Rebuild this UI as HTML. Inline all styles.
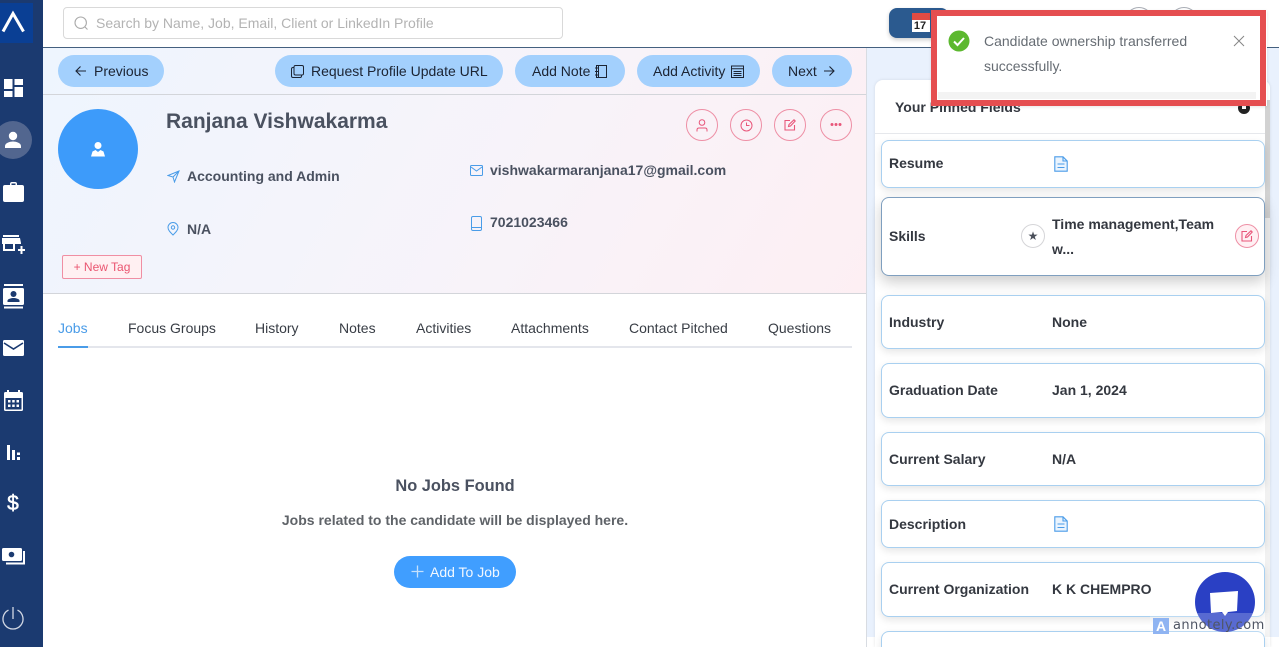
<!DOCTYPE html>
<html><head><meta charset="utf-8">
<style>
*{box-sizing:border-box}
html,body{margin:0;padding:0;width:1279px;height:647px;overflow:hidden;background:#fff;font-family:"Liberation Sans",sans-serif;color:#333}
#wrap{position:relative;width:1279px;height:647px;overflow:hidden}
.a{position:absolute}
.t{position:absolute;white-space:nowrap;line-height:20px}
svg{position:absolute;display:block}
.btn{position:absolute;height:32px;border-radius:16px;background:#a3d0fd;top:55px}
.bt{position:absolute;top:61px;font-size:14px;line-height:20px;color:#1c2433;white-space:nowrap}
.rnd{position:absolute;top:109px;width:32px;height:32px;border-radius:50%;border:1px solid #ee8fa5}
.tab{position:absolute;top:318px;font-size:14px;line-height:20px;color:#383d45;white-space:nowrap}
.b{font-weight:700;font-size:14px;color:#4a5160}
.card{position:absolute;left:881px;width:384px;background:#fff;border:1px solid #a9d0f0;border-radius:8px;box-shadow:0 3px 8px rgba(0,0,0,.1)}
.l{position:absolute;left:889px;font-weight:700;font-size:14px;line-height:20px;color:#343840;white-space:nowrap}
.v{position:absolute;left:1052px;font-weight:700;font-size:14px;line-height:20px;color:#343840;white-space:nowrap}
</style></head><body><div id="wrap">
<!-- main bg -->
<div class="a" style="left:43px;top:47px;width:824px;height:247px;background:linear-gradient(120deg,#eef5fe 0%,#f8f3f9 60%,#fdeff3 100%)"></div>
<div class="a" style="left:43px;top:94px;width:823px;height:1px;background:#d3d5da"></div>
<div class="a" style="left:43px;top:293px;width:823px;height:1px;background:#d3d5da"></div>
<div class="a" style="left:866px;top:47px;width:1px;height:600px;background:#d8dce2"></div>
<div class="a" style="left:867px;top:48px;width:412px;height:589px;background:#e9f1fd"></div>
<div class="a" style="left:867px;top:637px;width:412px;height:10px;background:#fff"></div>
<div class="a" style="left:43px;top:47px;width:1236px;height:1px;background:#44607f"></div>

<!-- sidebar -->
<div class="a" style="left:0;top:0;width:43px;height:647px;background:#1b3a70"></div>
<div class="a" style="left:0;top:3px;width:33px;height:40px;background:#0a3f94"></div>
<svg style="left:0;top:3px" width="33" height="40" viewBox="0 0 33 40"><path d="M3 28.500L13 10.500L23.500 28.500" fill="none" stroke="#fff" stroke-width="3"/></svg>
<svg style="left:4px;top:79px" width="19" height="18" viewBox="0 0 19 18" fill="#fff"><rect width="8.500" height="10"/><rect x="10.500" width="8.500" height="6"/><rect y="12" width="8.500" height="6"/><rect x="10.500" y="8" width="8.500" height="10"/></svg>
<div class="a" style="left:-6px;top:121px;width:38px;height:38px;border-radius:50%;background:#52668f"></div>
<svg style="left:4px;top:131px" width="18" height="18" viewBox="0 0 18 18" fill="#fff"><circle cx="9" cy="5" r="4.200"/><path d="M1 17v-2c0-3 5-4.500 8-4.500s8 1.500 8 4.500v2z"/></svg>
<svg style="left:3px;top:182px" width="21" height="20" viewBox="0 0 21 20" fill="#fff"><path d="M7 3V2q0-2 2-2h3q2 0 2 2v1h5q2 0 2 2v13q0 2-2 2H2q-2 0-2-2V5q0-2 2-2zM8.500 3h4V1.500h-4z"/></svg>
<svg style="left:2px;top:235px" width="23" height="20" viewBox="0 0 23 20" fill="#fff"><rect x="1" width="16" height="2"/><path d="M0 3h18l1 5v1H0V8z"/><path d="M1 9h2v5h8V9h2v7H1z"/><rect x="16" y="14" width="7" height="2"/><rect x="18.500" y="11" width="2" height="8"/></svg>
<svg style="left:3px;top:284px" width="21" height="25" viewBox="0 0 21 25" fill="#fff"><rect x="1" width="19" height="2"/><rect x="1" y="22.500" width="19" height="2"/><rect y="4" width="21" height="17" rx="1.500"/><circle cx="10.500" cy="10" r="3" fill="#1b3a70"/><path d="M4.500 18v-1.500c0-1.500 4-2.500 6-2.500s6 1 6 2.500V18z" fill="#1b3a70"/></svg>
<svg style="left:3px;top:340px" width="21" height="16" viewBox="0 0 21 16"><rect width="21" height="16" rx="1.500" fill="#fff"/><path d="M1 3l9.500 6L20 3" fill="none" stroke="#1b3a70" stroke-width="1.600"/></svg>
<svg style="left:4px;top:390px" width="19" height="21" viewBox="0 0 19 21" fill="#fff"><rect x="3" width="2" height="4"/><rect x="14" width="2" height="4"/><rect y="2" width="19" height="19" rx="1.500"/><rect x="1.500" y="8" width="16" height="11.500" fill="#1b3a70"/><g fill="#fff"><rect x="4" y="10" width="2.500" height="2.500"/><rect x="8.200" y="10" width="2.500" height="2.500"/><rect x="12.500" y="10" width="2.500" height="2.500"/><rect x="4" y="14.500" width="2.500" height="2.500"/><rect x="8.200" y="14.500" width="2.500" height="2.500"/><rect x="12.500" y="14.500" width="2.500" height="2.500"/></g></svg>
<svg style="left:7px;top:445px" width="14" height="15" viewBox="0 0 14 15" fill="#fff"><rect width="3" height="15"/><rect x="5" y="5" width="3" height="10"/><rect x="10" y="7.500" width="3" height="2.500"/><rect x="10" y="12" width="3" height="3"/></svg>
<div class="t" style="left:3px;top:494px;width:20px;text-align:center;font-size:21px;line-height:20px;color:#fff;-webkit-text-stroke:.5px #fff">$</div>
<svg style="left:2px;top:548px" width="23" height="18" viewBox="0 0 23 18"><rect width="20" height="13" rx="1.500" fill="#fff"/><circle cx="9.500" cy="6.500" r="2.800" fill="#1b3a70"/><path d="M22 3v12.500H4" fill="none" stroke="#fff" stroke-width="2"/></svg>
<svg style="left:2px;top:606px" width="22" height="25" viewBox="0 0 22 25" fill="none" stroke="#d2d8e4" stroke-width="1.300"><path d="M6.500 4.100a10 10 0 1 0 9 0"/><path d="M11 1v12"/></svg>

<!-- search -->
<div class="a" style="left:63px;top:7px;width:500px;height:32px;border:1px solid #d9d9d9;border-radius:4px;background:#fff"></div>
<svg style="left:74px;top:16px" width="15" height="15" viewBox="0 0 15 15" fill="none" stroke="#aaa" stroke-width="1.100"><circle cx="6.700" cy="6.700" r="5.700"/><path d="M11 11l2.500 2.500"/></svg>
<div class="t" style="left:96px;top:13px;font-size:14px;color:#b3b3b3">Search by Name, Job, Email, Client or LinkedIn Profile</div>

<!-- header btn -->
<div class="a" style="left:889px;top:8px;width:60px;height:30px;border-radius:8px;background:#2b5a8f;box-shadow:0 2px 4px rgba(0,0,0,.2)"></div>
<div class="a" style="left:912px;top:13px;width:18px;height:19px;background:#fff"></div>
<div class="a" style="left:912px;top:13px;width:18px;height:7px;background:#e14b43"></div>
<div class="t" style="left:911px;top:20px;width:18px;height:12px;line-height:12px;font-size:11px;font-weight:700;color:#222;text-align:center">17</div>
<div class="a" style="left:1125px;top:7px;width:28px;height:28px;border-radius:50%;border:1px solid #a9adb5"></div>
<div class="a" style="left:1170px;top:7px;width:28px;height:28px;border-radius:50%;border:1px solid #a9adb5"></div>

<!-- action buttons -->
<div class="btn" style="left:58px;width:106px"></div>
<svg style="left:75px;top:65px" width="12" height="12" viewBox="0 0 12 12" fill="none" stroke="#1c2433" stroke-width="1.100"><path d="M11 6H1M5.500 1.500L1 6l4.500 4.500"/></svg>
<div class="bt" style="left:94px">Previous</div>
<div class="btn" style="left:275px;width:228px"></div>
<svg style="left:291px;top:65px" width="13" height="13" viewBox="0 0 13 13" fill="none" stroke="#1c2433" stroke-width="1"><rect x="3" y=".5" width="9.500" height="9.500" rx="1.500"/><path d="M3 2.500H2Q.5 2.500 .5 4v7q0 1.500 1.500 1.500h7q1.500 0 1.500-1.500v-1"/></svg>
<div class="bt" style="left:311px">Request Profile Update URL</div>
<div class="btn" style="left:515px;width:110px"></div>
<div class="bt" style="left:532px">Add Note</div>
<svg style="left:595px;top:65px" width="13" height="13" viewBox="0 0 13 13" fill="none" stroke="#1c2433" stroke-width="1"><rect x="1.500" y=".5" width="10" height="12"/><path d="M3.500 .5v12M0 3h3M0 6.500h3M0 10h3"/></svg>
<div class="btn" style="left:637px;width:123px"></div>
<div class="bt" style="left:653px">Add Activity</div>
<svg style="left:731px;top:65px" width="13" height="13" viewBox="0 0 13 13" fill="none" stroke="#1c2433" stroke-width="1"><rect x=".5" y="1" width="12" height="11.500"/><path d="M.5 3.800h12M2.500 6.500h8M2.500 8.500h8M2.500 10.500h8"/></svg>
<div class="btn" style="left:772px;width:80px"></div>
<div class="bt" style="left:788px">Next</div>
<svg style="left:823px;top:65px" width="12" height="12" viewBox="0 0 12 12" fill="none" stroke="#1c2433" stroke-width="1.100"><path d="M1 6h10M6.500 1.500L11 6l-4.500 4.500"/></svg>

<!-- profile -->
<div class="a" style="left:58px;top:109px;width:80px;height:80px;border-radius:50%;background:#3d9bfa"></div>
<svg style="left:90px;top:141px" width="16" height="16" viewBox="0 0 16 16" fill="#fff"><circle cx="8" cy="4.500" r="3.500"/><path d="M1 15.500l1.500-5 3-1.500L8 11l2.500-2 3 1.500 1.500 5z"/></svg>
<div class="a" style="left:62px;top:255px;width:80px;height:24px;border:1px solid #f08ea3;border-radius:2px;background:#fff0f2"></div>
<div class="t" style="left:62px;top:257px;width:80px;text-align:center;font-size:12px;color:#ea5570">+ New Tag</div>
<div class="t" style="left:166px;top:110px;font-size:21px;line-height:24px;font-weight:700;color:#4a5160">Ranjana Vishwakarma</div>

<svg style="left:167px;top:170px" width="13" height="13" viewBox="0 0 13 13" fill="none" stroke="#4a9ce8" stroke-width="1"><path d="M12 1L1 5.500l5 1.500 1.500 5z M6 7l6-6"/></svg>
<div class="t b" style="left:187px;top:166px">Accounting and Admin</div>
<svg style="left:167px;top:222px" width="12" height="14" viewBox="0 0 12 14" fill="none" stroke="#4a9ce8" stroke-width="1"><path d="M6 13C3 10 1 8 1 5.500a5 5 0 0 1 10 0C11 8 9 10 6 13z"/><circle cx="6" cy="5.500" r="1.700"/></svg>
<div class="t b" style="left:187px;top:219px">N/A</div>
<svg style="left:470px;top:165px" width="13" height="11" viewBox="0 0 13 11" fill="none" stroke="#4a9ce8" stroke-width="1"><rect x=".5" y=".5" width="12" height="10" rx="1"/><path d="M1 2l5.500 4L12 2"/></svg>
<div class="t b" style="left:490px;top:160px">vishwakarmaranjana17@gmail.com</div>
<svg style="left:471px;top:216px" width="11" height="15" viewBox="0 0 11 15" fill="none" stroke="#4a9ce8" stroke-width="1"><rect x=".5" y=".5" width="10" height="14" rx="1.500"/><path d="M.5 11.500h10"/></svg>
<div class="t b" style="left:490px;top:212px">7021023466</div>

<div class="rnd" style="left:686px"></div>
<svg style="left:696px;top:119px" width="12" height="13" viewBox="0 0 12 13" fill="none" stroke="#e8567a" stroke-width="1"><circle cx="6" cy="3.500" r="2.800"/><path d="M1 12.500V11q0-2 2-2h6q2 0 2 2v1.500"/></svg>
<div class="rnd" style="left:730px"></div>
<svg style="left:740px;top:119px" width="13" height="13" viewBox="0 0 13 13" fill="none" stroke="#e8567a" stroke-width="1"><circle cx="6.500" cy="6.500" r="5.500"/><path d="M6.500 3.500v3h3"/></svg>
<div class="rnd" style="left:774px"></div>
<svg style="left:784px;top:119px" width="12" height="12" viewBox="0 0 12 12" fill="none" stroke="#e8567a" stroke-width="1.100"><path d="M6 1.500H1v9.500h9.500V6"/><path d="M4.500 7.500l.5-2L10 .800l1.200 1.200L6.500 7z"/></svg>
<div class="rnd" style="left:820px"></div>
<svg style="left:830px;top:122px" width="12" height="5" viewBox="0 0 12 5" fill="#e8567a"><circle cx="2" cy="2.500" r="1.500"/><circle cx="6" cy="2.500" r="1.500"/><circle cx="10" cy="2.500" r="1.500"/></svg>

<!-- tabs -->
<div class="tab" style="left:58px;color:#4a9ce8">Jobs</div>
<div class="tab" style="left:128px">Focus Groups</div>
<div class="tab" style="left:255px">History</div>
<div class="tab" style="left:339px">Notes</div>
<div class="tab" style="left:416px">Activities</div>
<div class="tab" style="left:511px">Attachments</div>
<div class="tab" style="left:629px">Contact Pitched</div>
<div class="tab" style="left:768px">Questions</div>
<div class="a" style="left:58px;top:346px;width:794px;height:2px;background:#e4e6ec"></div>
<div class="a" style="left:58px;top:346px;width:30px;height:2px;background:#4a9ce8"></div>

<!-- empty -->
<div class="t" style="left:58px;top:476px;width:794px;text-align:center;font-size:16.400px;font-weight:700;color:#4a5160;line-height:21px">No Jobs Found</div>
<div class="t" style="left:58px;top:510px;width:794px;text-align:center;font-size:14px;font-weight:700;color:#5f6368">Jobs related to the candidate will be displayed here.</div>
<div class="a" style="left:394px;top:556px;width:122px;height:32px;border-radius:16px;background:#409eff"></div>
<svg style="left:411px;top:565px" width="13" height="13" viewBox="0 0 13 13" fill="none" stroke="#c4e0fc" stroke-width="1.300"><path d="M6.500 .5v12M.5 6.500h12"/></svg>
<div class="t" style="left:430px;top:562px;font-size:14px;color:#f2f8ff">Add To Job</div>

<!-- right panel -->
<div class="a" style="left:875px;top:80px;width:395px;height:567px;background:#fff;border-radius:8px 8px 0 0;box-shadow:0 0 3px rgba(0,0,0,.1)"></div>
<div class="a" style="left:875px;top:133px;width:395px;height:1px;background:#e6e8ec"></div>
<div class="t" style="left:895px;top:97px;font-size:14px;font-weight:700;color:#343840">Your Pinned Fields</div>
<div class="a" style="left:1238px;top:102px;width:12px;height:12px;border-radius:50%;background:#222"></div>
<div class="a" style="left:1242px;top:106px;width:4px;height:3px;background:#fff"></div>
<div class="a" style="left:1265px;top:100px;width:5px;height:537px;background:#f1f1f1"></div>
<div class="a" style="left:1265px;top:100px;width:5px;height:118px;background:#d2d2d2"></div>

<div class="card" style="top:140px;height:48px"></div>
<div class="l" style="top:153px">Resume</div>
<svg style="left:1054px;top:156px" width="14" height="16" viewBox="0 0 14 16" fill="#eaf4fe" stroke="#4a9ce8" stroke-width="1.100"><path d="M.8 .8H9L13.200 5v10.200H.8z"/><path d="M9 .8V5h4.200M3.500 8h7M3.500 11.500h7" fill="none"/></svg>

<div class="card" style="top:197px;height:79px;border-color:#7f9fbf;box-shadow:0 6px 14px rgba(0,0,0,.2)"></div>
<div class="l" style="top:226px">Skills</div>
<div class="a" style="left:1021px;top:224px;width:24px;height:24px;border-radius:50%;border:1px solid #d5d5d8;background:#fff"></div>
<div class="t" style="left:1021px;top:226px;width:24px;text-align:center;font-size:12px;color:#4a4f5a">★</div>
<div class="t" style="left:1052px;top:212px;font-size:14px;font-weight:700;color:#343840;line-height:25px;white-space:normal;width:175px">Time management,Team w...</div>
<div class="a" style="left:1235px;top:224px;width:24px;height:24px;border-radius:50%;border:1px solid #ee8fa5;background:#fff0f3"></div>
<svg style="left:1241px;top:230px" width="12" height="12" viewBox="0 0 12 12" fill="none" stroke="#e8567a" stroke-width="1.100"><path d="M6 1.500H1v9.500h9.500V6"/><path d="M4.500 7.500l.5-2L10 .800l1.200 1.200L6.500 7z"/></svg>

<div class="card" style="top:295px;height:54px"></div>
<div class="l" style="top:312px">Industry</div><div class="v" style="top:312px">None</div>
<div class="card" style="top:363px;height:55px"></div>
<div class="l" style="top:380px">Graduation Date</div><div class="v" style="top:380px">Jan 1, 2024</div>
<div class="card" style="top:432px;height:54px"></div>
<div class="l" style="top:449px">Current Salary</div><div class="v" style="top:449px">N/A</div>
<div class="card" style="top:500px;height:48px"></div>
<div class="l" style="top:514px">Description</div>
<svg style="left:1054px;top:516px" width="14" height="16" viewBox="0 0 14 16" fill="#eaf4fe" stroke="#4a9ce8" stroke-width="1.100"><path d="M.8 .8H9L13.200 5v10.200H.8z"/><path d="M9 .8V5h4.200M3.500 8h7M3.500 11.500h7" fill="none"/></svg>
<div class="card" style="top:562px;height:55px"></div>
<div class="l" style="top:579px">Current Organization</div><div class="v" style="top:579px">K K CHEMPRO</div>
<div class="card" style="top:631px;height:40px"></div>

<!-- chat -->
<div class="a" style="left:1195px;top:572px;width:60px;height:60px;border-radius:50%;background:#2a40c4"></div>
<svg style="left:1209px;top:590px" width="30" height="28" viewBox="0 0 30 28" fill="#fff"><path d="M1 3L29 1l-1 20-9 1-3 4-3-4-11 1z"/></svg>
<div class="a" style="left:1150px;top:613px;width:119px;height:25px;background:rgba(255,255,255,.22)"></div>
<div class="a" style="left:1153px;top:618px;width:16px;height:16px;background:#8fb4f2"></div>
<div class="t" style="left:1153px;top:618px;width:16px;height:16px;line-height:17px;text-align:center;color:#fff;font-weight:700;font-size:14px">A</div>
<div class="t" style="left:1173px;top:616px;letter-spacing:.4px;color:#4f5564;font-family:'DejaVu Sans',sans-serif;font-size:13px">annotely.com</div>

<!-- toast -->
<div class="a" style="left:931px;top:10px;width:336px;height:96px;background:#fff;box-shadow:0 1px 3px rgba(0,0,0,.1)"></div>
<div class="a" style="left:938px;top:92px;width:318px;height:7px;background:#f3f3f3"></div>
<svg style="left:948px;top:30px" width="22" height="22" viewBox="0 0 22 22"><circle cx="11" cy="11" r="10.500" fill="#5cb82f"/><path d="M6 11.500l3.500 3.500 6.500-7" fill="none" stroke="#fff" stroke-width="2"/></svg>
<div class="t" style="left:984px;top:29px;font-size:14px;line-height:25px;color:#666c73">Candidate ownership transferred<br>successfully.</div>
<svg style="left:1233px;top:35px" width="12" height="12" viewBox="0 0 12 12" fill="none" stroke="#858585" stroke-width="1"><path d="M1 1l10 10M11 1L1 11"/></svg>
<div class="a" style="left:931px;top:10px;width:335px;height:96px;border:6px solid #e54e50"></div>
</div></body></html>
